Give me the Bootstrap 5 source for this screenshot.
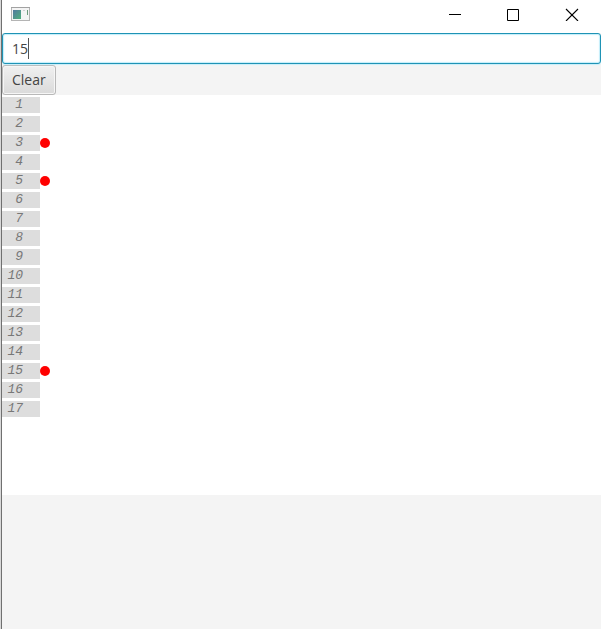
<!DOCTYPE html>
<html lang="en">
<head>
<meta charset="utf-8">
<meta name="viewport" content="width=device-width, initial-scale=1">
<title>Line markers</title>
<link href="https://cdn.jsdelivr.net/npm/bootstrap@5.3.0/dist/css/bootstrap.min.css" rel="stylesheet">
<style>
body { font-family: "Open Sans", "Noto Sans", sans-serif; background: #d8d8d8; padding-left: 1px; color: #333; }
.app-window { background: #f4f4f4; border-left: 1px solid #707070; overflow: hidden; }
.title-bar { height: 33px; padding: 0 22px 6px 9px; background: #fff; }
.win-btn { width: 14px; height: 14px; line-height: 0; }
.win-buttons { gap: 45px; }
.line-input { height: 31px; padding: 0 9px; font-size: 14px; color: #444; border: 1px solid #1f93b5; border-radius: 3px; box-shadow: inset 0 0 0 1px #c8effa, inset 0 0 2px 1px #e2f7fd, 0 1px 1px #c8effa; }
.line-input:focus { color: #444; border-color: #1f93b5; box-shadow: inset 0 0 0 1px #c8effa, inset 0 0 2px 1px #e2f7fd, 0 1px 1px #c8effa; }
.text-caret { left: 26px; top: 5px; width: 1px; height: 21px; background: #555; }
.tool-row { padding-top: 1px; }
.clear-btn { height: 30px; padding: 0 9px; font-size: 14px; line-height: 26px; color: #444; border: 1px solid #b8b8b8; border-radius: 3px; background: linear-gradient(#f0f0f0, #dadada); box-shadow: inset 0 0 0 1px #f6f6f6; }
.editor { min-height: 400px; background: #fff; }
.line-row { height: 19px; }
.line-no { width: 38px; height: 16px; padding-right: 17px; background: #ddd; color: #777; font: italic 13px/16px "Liberation Mono", monospace; text-align: right; }
.marker { width: 10px; height: 10px; background: #f00; }
</style>
<script src="https://cdn.jsdelivr.net/npm/bootstrap@5.3.0/dist/js/bootstrap.bundle.min.js"></script>
</head>
<body>
<div class="app-window min-vh-100">
  <header class="title-bar d-flex align-items-center justify-content-between">
    <svg width="20" height="16" viewBox="0 0 20 16" aria-hidden="true">
      <defs><linearGradient id="pane" x1="0" y1="0" x2="1" y2="1"><stop offset="0" stop-color="#5379a0"/><stop offset="1" stop-color="#4fb07c"/></linearGradient></defs>
      <rect x="0.500" y="1.500" width="18" height="13" fill="#f4f4f4" stroke="#b4b4b4"/>
      <path d="M0 1.500H19" stroke="#a2a2a2"/>
      <rect x="2" y="4" width="8" height="9" fill="url(#pane)"/>
      <path d="M12 4.500H14" stroke="#d0d0d0"/>
      <path d="M16.500 4V9" stroke="#6d9a7d"/>
    </svg>
    <div class="win-buttons d-flex">
      <button type="button" class="win-btn btn p-0 border-0 rounded-0" aria-label="Minimize"><svg width="14" height="14" viewBox="0 0 14 14" stroke="#000" fill="none"><path d="M2 7.500H14"/></svg></button>
      <button type="button" class="win-btn btn p-0 border-0 rounded-0" aria-label="Maximize"><svg width="14" height="14" viewBox="0 0 14 14" stroke="#000" fill="none"><path d="M1.500 2.500H12.500V13.500H1.500Z"/></svg></button>
      <button type="button" class="win-btn btn p-0 border-0 rounded-0" aria-label="Close"><svg width="14" height="14" viewBox="0 0 14 14" stroke="#000" stroke-width="1.100" fill="none"><path d="M1 2L13 14M13 2L1 14"/></svg></button>
    </div>
  </header>
  <main>
    <div class="position-relative">
      <input class="form-control line-input" type="text" value="15" aria-label="Line number">
      <span class="text-caret position-absolute"></span>
    </div>
    <div class="tool-row d-flex"><button type="button" class="btn clear-btn">Clear</button></div>
    <div class="editor">
      <div class="line-row d-flex align-items-center"><div class="line-no">1</div></div>
      <div class="line-row d-flex align-items-center"><div class="line-no">2</div></div>
      <div class="line-row d-flex align-items-center"><div class="line-no">3</div><span class="marker rounded-circle"></span></div>
      <div class="line-row d-flex align-items-center"><div class="line-no">4</div></div>
      <div class="line-row d-flex align-items-center"><div class="line-no">5</div><span class="marker rounded-circle"></span></div>
      <div class="line-row d-flex align-items-center"><div class="line-no">6</div></div>
      <div class="line-row d-flex align-items-center"><div class="line-no">7</div></div>
      <div class="line-row d-flex align-items-center"><div class="line-no">8</div></div>
      <div class="line-row d-flex align-items-center"><div class="line-no">9</div></div>
      <div class="line-row d-flex align-items-center"><div class="line-no">10</div></div>
      <div class="line-row d-flex align-items-center"><div class="line-no">11</div></div>
      <div class="line-row d-flex align-items-center"><div class="line-no">12</div></div>
      <div class="line-row d-flex align-items-center"><div class="line-no">13</div></div>
      <div class="line-row d-flex align-items-center"><div class="line-no">14</div></div>
      <div class="line-row d-flex align-items-center"><div class="line-no">15</div><span class="marker rounded-circle"></span></div>
      <div class="line-row d-flex align-items-center"><div class="line-no">16</div></div>
      <div class="line-row d-flex align-items-center"><div class="line-no">17</div></div>
    </div>
  </main>
</div>
</body>
</html>
